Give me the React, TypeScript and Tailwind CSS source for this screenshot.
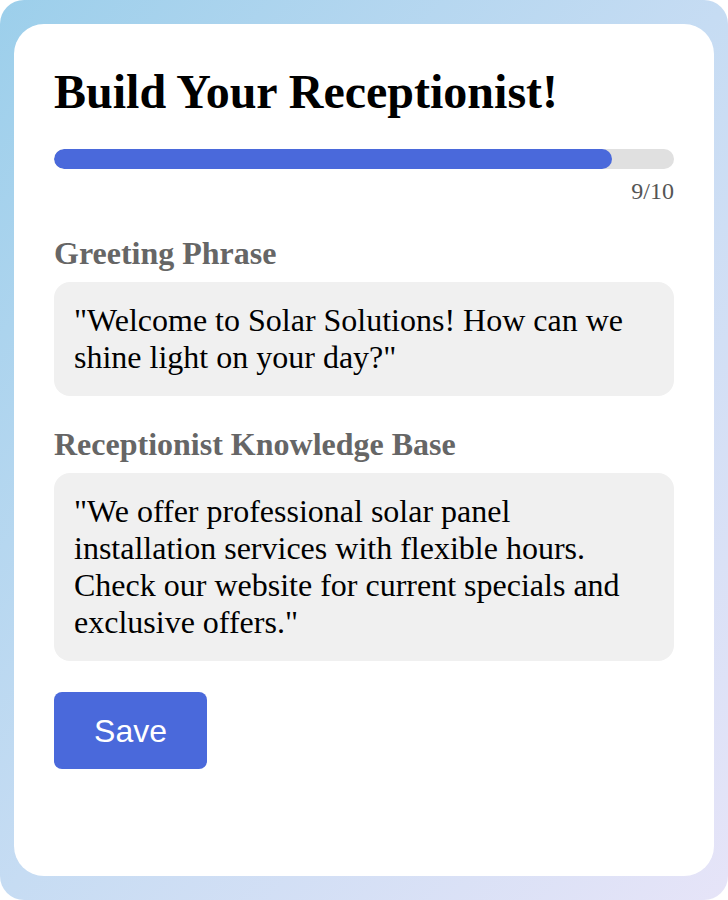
import React from "react";

export default function App() {
  const progress = 9 / 10;
  return (
    <div className="w-[728px] h-[900px] bg-white">
      <div className="w-full h-full rounded-[24px] bg-gradient-to-br from-[#9ccfeb] via-[#c6dcf3] to-[#e6e4f8] px-[14px] py-[24px]">
        <div
          className="w-full h-full rounded-[30px] bg-white px-[40px] py-[40px]"
          style={{ fontFamily: '"Liberation Serif", "Times New Roman", serif' }}
        >
          <h1 className="text-[48px] font-bold leading-[55px] text-black">
            Build Your Receptionist!
          </h1>
          <div className="mt-[30px] h-[20px] w-full rounded-full bg-[#e0e0e0] overflow-hidden">
            <div
              className="h-full rounded-full bg-[#4a69db]"
              style={{ width: `${progress * 100}%` }}
            />
          </div>
          <div className="mt-[8px] text-right text-[24px] leading-[28px] text-[#555]">9/10</div>
          <div className="mt-[30px] text-[32px] font-bold leading-[37px] text-[#666]">
            Greeting Phrase
          </div>
          <div className="mt-[10px] rounded-[16px] bg-[#f0f0f0] p-[20px] text-[32px] leading-[37px] text-black">
            "Welcome to Solar Solutions! How can we shine light on your day?"
          </div>
          <div className="mt-[30px] text-[32px] font-bold leading-[37px] text-[#666]">
            Receptionist Knowledge Base
          </div>
          <div className="mt-[10px] rounded-[16px] bg-[#f0f0f0] p-[20px] text-[32px] leading-[37px] text-black">
            "We offer professional solar panel installation services with flexible hours. Check our website for current specials and exclusive offers."
          </div>
          <button
            className="mt-[31px] h-[77px] w-[153px] rounded-[8px] bg-[#4a69db] text-[32px] text-white"
            style={{ fontFamily: '"Liberation Sans", Arial, sans-serif' }}
          >
            Save
          </button>
        </div>
      </div>
    </div>
  );
}
